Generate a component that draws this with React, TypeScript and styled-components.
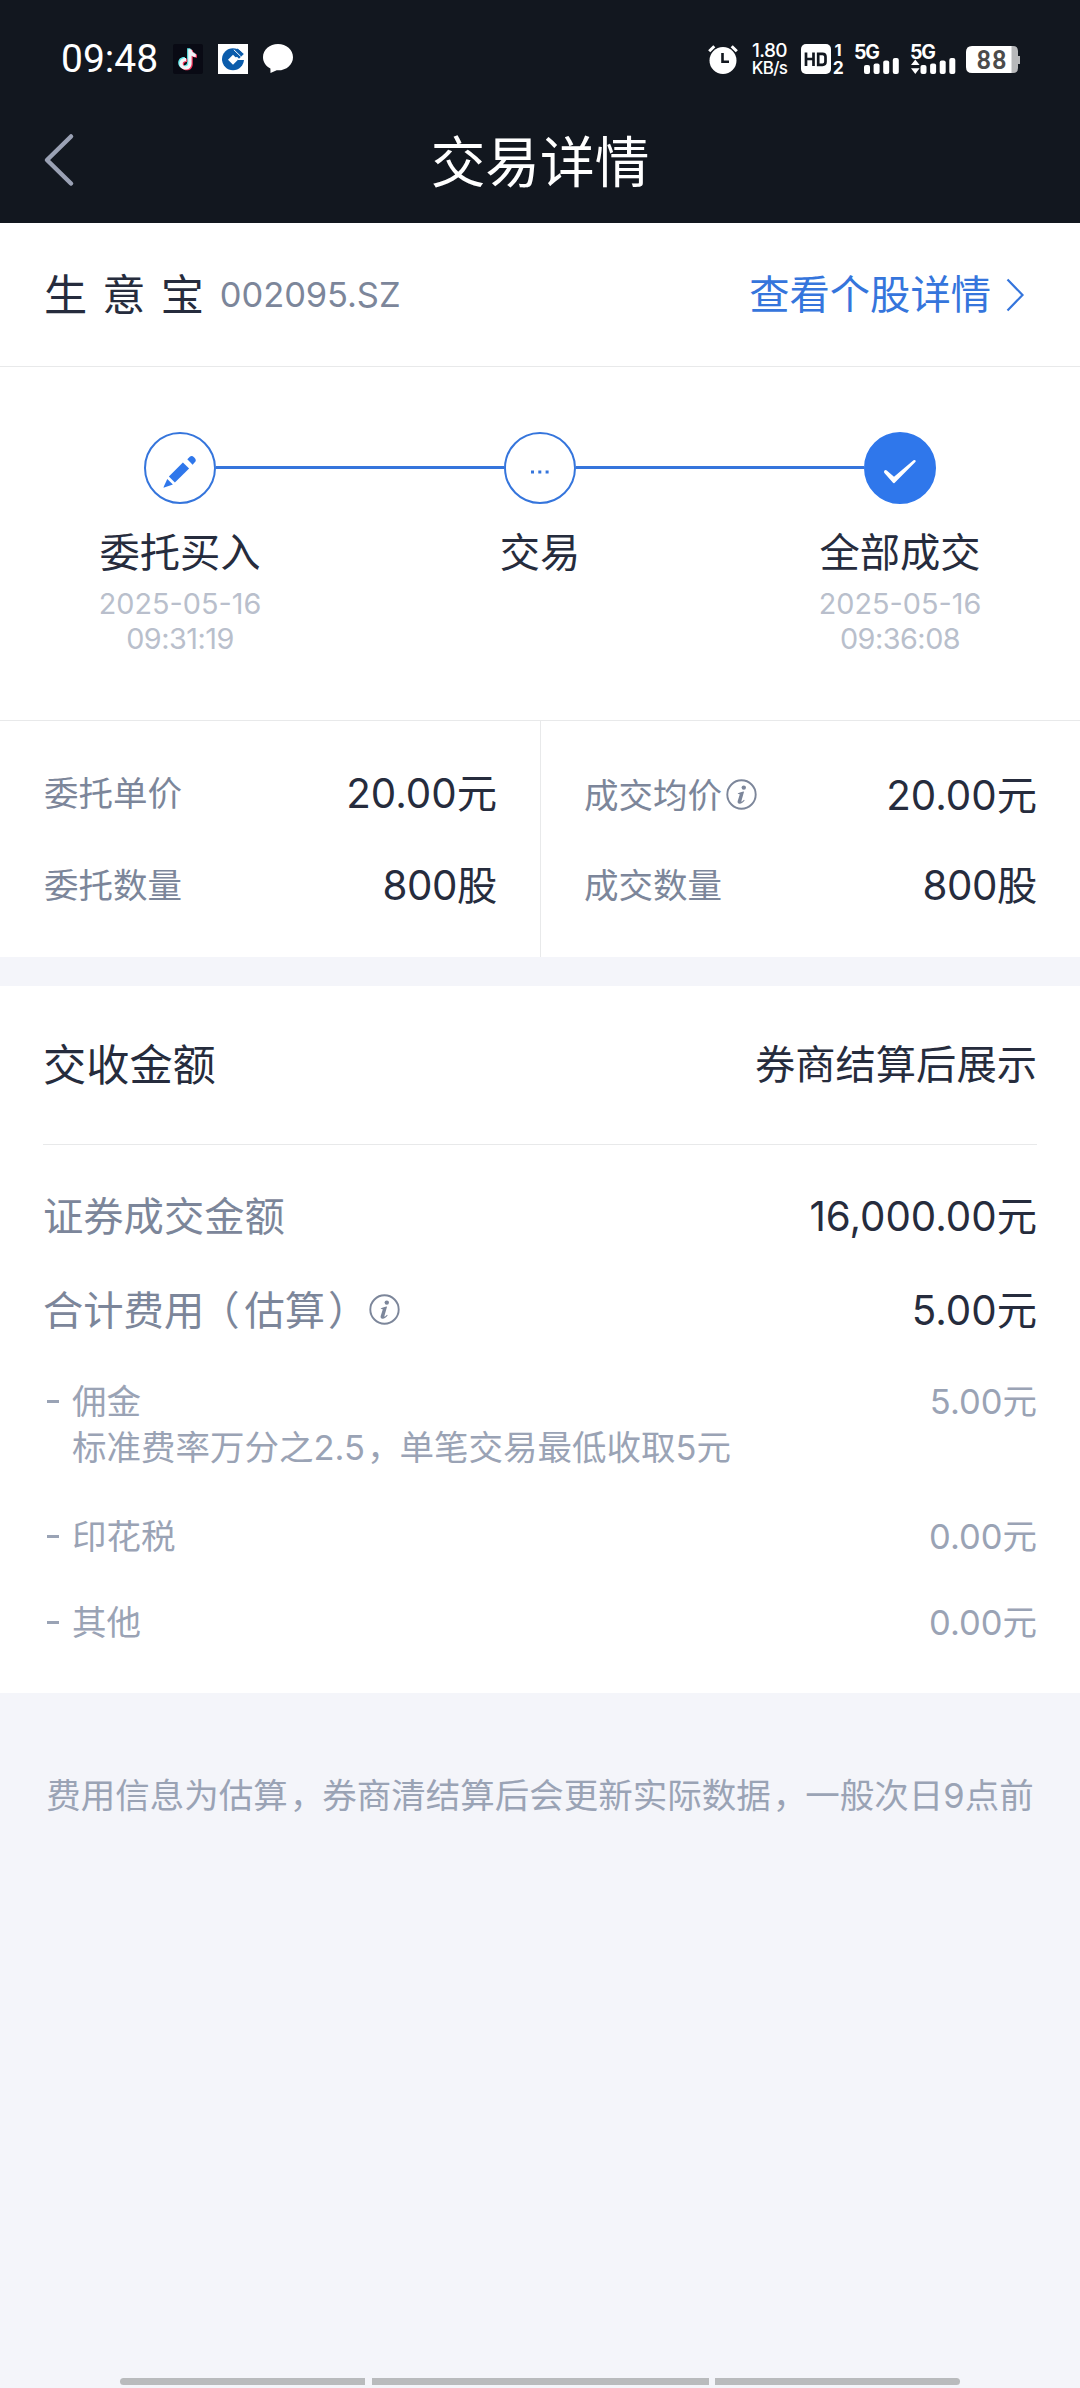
import React from "react";
import styled, { createGlobalStyle } from "styled-components";

const color = {
  bar: "#12171f",
  page: "#f4f5fa",
  ink: "#262c3d",
  label: "#7c869a",
  muted: "#9aa3b5",
  faint: "#b9bfcc",
  rule: "#e8e9ea",
  link: "#3575dc",
  blue: "#2f77eb",
};

const GlobalStyle = createGlobalStyle`
  * { box-sizing: border-box; }
  body {
    margin: 0;
    background: ${color.page};
    font-family: Inter, "Noto Sans CJK SC", sans-serif;
    font-weight: 400;
    color: ${color.ink};
  }
  svg { display: block; flex: none; overflow: visible; }
`;

const Screen = styled.div`
  width: 1080px;
  height: 2388px;
  display: flex;
  flex-direction: column;
  background: ${color.page};
  overflow: hidden;
`;

const Header = styled.header`
  height: 223px;
  background: ${color.bar};
  color: #fff;
`;

const StatusBar = styled.div`
  height: 104px;
  padding: 44px 60px 0 61px;
  display: flex;
  justify-content: space-between;
`;

const StatusGroup = styled.div`
  height: 30px;
  display: flex;
  align-items: center;
`;

const Clock = styled.span`
  width: 112px;
  font: 400 39px/46px Roboto, sans-serif;
  white-space: nowrap;
`;

const AppIcons = styled.div`
  display: flex;
  gap: 15px;
`;

const NetSpeed = styled.div`
  width: 37px;
  margin: 0 13px;
  display: flex;
  flex-direction: column;
  align-items: center;
  white-space: nowrap;
  gap: 1px;
`;

const SpeedText = styled.span<{ $size: number; $spacing: number }>`
  font-size: ${(p) => p.$size}px;
  letter-spacing: ${(p) => p.$spacing}px;
  line-height: 16px;
  font-weight: 500;
`;

const StatusIcons = styled.div`
  display: flex;
  gap: 11px;
  margin-right: 10px;
`;

const NavBar = styled.div`
  height: 119px;
  padding: 0 44px;
  display: grid;
  grid-template-columns: 60px 1fr 60px;
  align-items: center;
`;

const Title = styled.h1`
  margin: 0;
  padding-bottom: 3px;
  text-align: center;
  font-size: 54.7px;
  line-height: 80px;
  font-weight: 400;
`;

const BackIcon = styled.svg`
  margin-bottom: 8px;
`;

const StockRow = styled.section`
  height: 144px;
  padding: 0 56px 0 44px;
  display: flex;
  align-items: center;
  background: #fff;
  border-bottom: 1px solid ${color.rule};
`;

const StockName = styled.span`
  font-size: 43.2px;
  line-height: 60px;
  word-spacing: 3px;
`;

const StockCode = styled.span`
  margin-left: 16px;
  flex: 1;
  font-size: 34.5px;
  letter-spacing: -0.1px;
  line-height: 48px;
  color: ${color.label};
`;

const StockLink = styled.a`
  display: flex;
  align-items: center;
  gap: 15px;
  font-size: 40.3px;
  line-height: 56px;
  color: ${color.link};
`;

const Steps = styled.section`
  height: 354px;
  padding-top: 65px;
  display: grid;
  grid-template-columns: repeat(3, 360px);
  background: #fff;
  border-bottom: 1px solid ${color.rule};
`;

const Step = styled.div`
  display: flex;
  flex-direction: column;
  align-items: center;
`;

const StepTrack = styled.div`
  width: 100%;
  height: 72px;
  display: flex;
  align-items: center;
`;

const TrackLine = styled.i<{ $on: boolean }>`
  flex: 1;
  height: 3px;
  margin-bottom: 1px;
  background: ${(p) => (p.$on ? color.link : "transparent")};
`;

const StepDot = styled.span<{ $filled?: boolean }>`
  width: 72px;
  height: 72px;
  border-radius: 50%;
  border: 2px solid ${(p) => (p.$filled ? color.blue : color.link)};
  background: ${(p) => (p.$filled ? color.blue : "#fff")};
  display: flex;
  align-items: center;
  justify-content: center;
`;

const IconNudge = styled.span<{ $top: number }>`
  padding-top: ${(p) => p.$top}px;
`;

const StepLabel = styled.span`
  margin-top: 21px;
  font-size: 40.3px;
  line-height: 56px;
`;

const StepTime = styled.time`
  margin-top: 5px;
  display: flex;
  flex-direction: column;
  align-items: center;
  font-size: 28.8px;
  line-height: 35px;
  color: ${color.faint};
`;

const TimeText = styled.span`
  letter-spacing: -0.5px;
`;

const Figures = styled.section`
  height: 236px;
  display: grid;
  grid-template-columns: 540px 540px;
  background: #fff;
`;

const FigureColumn = styled.div<{ $divided?: boolean }>`
  padding: 44px 43px 0 ${(p) => (p.$divided ? 43 : 44)}px;
  border-left: ${(p) => (p.$divided ? `1px solid ${color.rule}` : "0")};
  display: flex;
  flex-direction: column;
  gap: 34px;
`;

const FigureRow = styled.div<{ $shift?: number }>`
  height: 58px;
  padding-top: ${(p) => (p.$shift ?? 0) * 2}px;
  display: flex;
  align-items: center;
  justify-content: space-between;
`;

const FigureLabel = styled.span`
  display: flex;
  align-items: center;
  gap: 4px;
  font-size: 34.5px;
  line-height: 50px;
  color: ${color.label};
`;

const Amount = styled.span<{ $muted?: boolean; $tight?: boolean }>`
  font-size: ${(p) => (p.$muted ? 34.5 : 40.3)}px;
  line-height: ${(p) => (p.$muted ? 46 : 58)}px;
  letter-spacing: ${(p) => (p.$tight ? -0.4 : 0)}px;
  color: ${(p) => (p.$muted ? color.muted : color.ink)};
`;

const Settlement = styled.section`
  height: 707px;
  margin-top: 29px;
  padding: 0 43px;
  background: #fff;
`;

const SettlementHead = styled.div`
  height: 159px;
  border-bottom: 1px solid ${color.rule};
  display: flex;
  align-items: center;
  justify-content: space-between;
`;

const SettlementTitle = styled.h2`
  margin: 0;
  font-size: 43.2px;
  line-height: 60px;
  font-weight: 400;
`;

const CostList = styled.div`
  padding-top: 43px;
`;

const CostRow = styled.div<{ $after: number }>`
  height: 58px;
  margin-bottom: ${(p) => p.$after}px;
  display: flex;
  align-items: center;
  justify-content: space-between;
`;

const CostLabel = styled.span`
  display: flex;
  align-items: center;
  gap: 4px;
  white-space: nowrap;
  font-size: 40.3px;
  line-height: 58px;
  color: ${color.label};
`;

/* Moves a full-width mark inside its own em box without changing the line's width. */
const Mark = styled.span<{ $by: number }>`
  margin-left: ${(p) => p.$by}px;
  margin-right: ${(p) => -p.$by}px;
`;

const FeeRow = styled.div<{ $after: number }>`
  margin-bottom: ${(p) => p.$after}px;
  display: grid;
  grid-template-columns: 29px 1fr auto;
  font-size: 34.5px;
  line-height: 46px;
  color: ${color.muted};
`;

const FeeDash = styled.i`
  width: 12px;
  height: 2.5px;
  margin: 21px 0 0 4px;
  background: ${color.muted};
`;

const FeeText = styled.div`
  display: flex;
  flex-direction: column;
  white-space: nowrap;
`;

const Note = styled.p`
  margin: 78px 0 0;
  text-align: center;
  white-space: nowrap;
  font-size: 34.5px;
  line-height: 50px;
  color: ${color.muted};
`;

const HomeIndicator = styled.div`
  margin-top: auto;
  padding: 0 120px 3px;
  display: grid;
  grid-template-columns: 245px 337px 245px;
  justify-content: space-between;
`;

const IndicatorPart = styled.i<{ $radius: string }>`
  height: 7px;
  border-radius: ${(p) => p.$radius};
  background: #b9bbbd;
`;

const InfoSvg = styled.svg`
  margin-bottom: 3px;
`;

function TikTokIcon() {
  const note =
    "M14.7 5.2h3.2c.3 2.6 1.8 4.2 4.3 4.5v3.3c-1.6-.05-3-.5-4.2-1.3v7.2c0 4.3-2.7 6.6-6.2 6.6-3.4 0-6-2.4-6-5.8 0-3.7 2.9-6.1 6.7-5.7v3.4c-2-.4-3.4.6-3.4 2.3 0 1.5 1.2 2.5 2.6 2.5 1.8 0 3-1.2 3-3.3z";
  return (
    <svg width="30" height="30" viewBox="0 0 30 30">
      <rect width="30" height="30" rx="2" fill="#090a14" />
      <path d={note} fill="#5fe8ea" transform="translate(-.6 -.9)" />
      <path d={note} fill="#f5365c" transform="translate(1.8 .8)" />
      <path d={note} fill="#f1f4f8" transform="translate(.6 0)" />
    </svg>
  );
}

function BankIcon() {
  return (
    <svg width="30" height="30" viewBox="0 0 30 30">
      <rect width="30" height="30" fill="#fff" />
      <circle cx="15" cy="15.3" r="11" fill="#0b5cab" />
      <path d="M15 10.8l5 5-5 5-5-5z" fill="#fff" />
      <path d="M17 13.8l3 2.2H27V9z" fill="#fff" />
      <path d="M19.5 4.6l6.3 5.5-4.8 4.6-6-6z" fill="#0b5cab" />
      <path d="M15.8 5.7l7 6.8" stroke="#fff" strokeWidth="1" fill="none" />
    </svg>
  );
}

function BubbleIcon() {
  return (
    <svg width="30" height="30" viewBox="0 0 30 30">
      <path
        d="M15 0C6.7 0 0 5.8 0 13.2c0 4.7 2.8 8.9 7.4 11.2L7.5 29l6.2-2.7c9.2.7 16.3-5.5 16.3-13.1C30 5.8 23.3 0 15 0z"
        fill="#fff"
      />
    </svg>
  );
}

function AlarmIcon() {
  return (
    <svg width="30" height="30" viewBox="0 0 30 30">
      <circle cx="15" cy="16.5" r="13.5" fill="#fff" />
      <path d="M1.2 7.3L6.3 2.3M28.8 7.3L23.7 2.3" stroke="#fff" strokeWidth="3" />
      <path d="M14.5 9v8.8h6.5" stroke={color.bar} strokeWidth="2.6" fill="none" />
    </svg>
  );
}

function HdIcon() {
  return (
    <svg width="43" height="30" viewBox="0 0 43 30" fontFamily="Inter, sans-serif" fontWeight="700">
      <rect width="30" height="30" rx="5" fill="#fff" />
      <path
        d="M5 8.5v13.5M12.5 8.5v13.5M5 15h7.5M17.2 9.8h4.3q3 0 3 3v5q0 3-3 3h-4.3z"
        stroke={color.bar}
        strokeWidth="2.7"
        fill="none"
      />
      <text x="33.5" y="12" fontSize="16.5" fill="#fff">1</text>
      <text x="31.8" y="30" fontSize="17.5" fill="#fff">2</text>
    </svg>
  );
}

function SignalIcon({ busy = false }: { busy?: boolean }) {
  const heights = [9, 10.5, 13.5, 16];
  const start = busy ? 9.5 : 9;
  return (
    <svg width="45" height="30" viewBox="0 0 45 30" fill="#fff">
      <text x="-1" y="14.5" fontFamily="Inter, sans-serif" fontWeight="700" fontSize="19.5" letterSpacing="-1.2">
        5G
      </text>
      {heights.map((h, i) => (
        <rect key={i} x={start + i * 9.6} y={30 - h} width="6" height={h} rx="2" />
      ))}
      {busy && <path d="M0 21l4.3-5.5L8.6 21zM0 24.3h8.6L4.3 30z" />}
    </svg>
  );
}

function BatteryIcon() {
  return (
    <svg width="54" height="27" viewBox="0 0 54 27">
      <path d="M44 0h3q5 0 5 5v5h2v8h-2v4q0 5-5 5h-3z" fill="#b7b8ba" />
      <path d="M6 0h39.5v27H6q-6 0-6-6V6q0-6 6-6z" fill="#fff" />
      <text
        x="26"
        y="23"
        textAnchor="middle"
        fontFamily="Roboto, sans-serif"
        fontWeight="600"
        fontSize="25.5"
        letterSpacing="1"
        fill="#4b4b4b"
      >
        88
      </text>
    </svg>
  );
}

function InfoIcon() {
  return (
    <InfoSvg width="31" height="31" viewBox="0 0 31 31">
      <circle cx="15.5" cy="15.5" r="14.2" fill="none" stroke={color.label} strokeWidth="1.9" />
      <circle cx="17.8" cy="8.6" r="2.2" fill={color.label} />
      <path
        d="M11.8 14.4c2-.9 3.9-1.5 6.3-1.8l-2.7 9.3c-.2.9.4.9 1 .4l1.6-1.6.7.5c-1.6 2.4-3.4 3.6-5.2 3.5-1.7 0-2.2-1.2-1.8-2.6l1.9-6.2c.2-.8-.3-.9-1.7-.8z"
        fill={color.label}
      />
    </InfoSvg>
  );
}

function PencilIcon() {
  return (
    <svg width="34" height="34" viewBox="0 0 34 34" fill={color.blue}>
      <path d="M24.3 4.3l2.5-2.5q2-1.6 4.2.4l.7.7q2 2.2.3 4.2l-2.4 2.7z" />
      <path d="M19.9 7.5l6.2 5.9L11.9 27.6 5.9 21.4z" />
      <path d="M4.3 24.1l5.6 5.3-8.7 3.2q-.9.2-.6-.7z" />
    </svg>
  );
}

function DotsIcon() {
  return (
    <svg width="18" height="4" viewBox="0 0 18 4" fill={color.link}>
      <rect x="0" y=".5" width="3" height="3" />
      <rect x="7.3" y=".5" width="3" height="3" />
      <rect x="14.6" y=".5" width="3" height="3" />
    </svg>
  );
}

function CheckIcon() {
  return (
    <svg width="34" height="26" viewBox="0 0 34 26" fill="#fff">
      <path d="M1.3 11.8q1.2-1.3 2.5-.2l7.2 6.2L30.5 1.2q1.5-.8 2.2.5.3.8-.6 1.6L11.5 23.9q-.8.6-1.5-.1L1.4 14.1q-.8-1.2-.1-2.3z" />
    </svg>
  );
}

const steps = [
  { label: "委托买入", date: "2025-05-16", time: "09:31:19", icon: <IconNudge $top={8}><PencilIcon /></IconNudge> },
  { label: "交易", icon: <IconNudge $top={7}><DotsIcon /></IconNudge> },
  { label: "全部成交", date: "2025-05-16", time: "09:36:08", icon: <IconNudge $top={7}><CheckIcon /></IconNudge> },
];

export default function App() {
  return (
    <Screen>
      <GlobalStyle />
      <Header>
        <StatusBar>
          <StatusGroup>
            <Clock>09:48</Clock>
            <AppIcons>
              <TikTokIcon />
              <BankIcon />
              <BubbleIcon />
            </AppIcons>
          </StatusGroup>
          <StatusGroup>
            <AlarmIcon />
            <NetSpeed>
              <SpeedText $size={19} $spacing={-0.6}>1.80</SpeedText>
              <SpeedText $size={17} $spacing={-0.7}>KB/s</SpeedText>
            </NetSpeed>
            <StatusIcons>
              <HdIcon />
              <SignalIcon />
              <SignalIcon busy />
            </StatusIcons>
            <BatteryIcon />
          </StatusGroup>
        </StatusBar>
        <NavBar>
          <BackIcon width="30" height="54" viewBox="0 0 30 54">
            <path
              d="M27 3.5L3 27l24 23.5"
              fill="none"
              stroke="#9aa1b4"
              strokeWidth="4.5"
              strokeLinecap="round"
              strokeLinejoin="round"
            />
          </BackIcon>
          <Title>交易详情</Title>
        </NavBar>
      </Header>

      <StockRow>
        <StockName>生 意 宝</StockName>
        <StockCode>002095.SZ</StockCode>
        <StockLink>
          查看个股详情
          <svg width="18" height="34" viewBox="0 0 18 34">
            <path d="M1.5 1.5L16.5 17l-15 15.5" fill="none" stroke={color.link} strokeWidth="2.2" />
          </svg>
        </StockLink>
      </StockRow>

      <Steps>
        {steps.map((step, i) => (
          <Step key={step.label}>
            <StepTrack>
              <TrackLine $on={i > 0} />
              <StepDot $filled={i === steps.length - 1}>{step.icon}</StepDot>
              <TrackLine $on={i < steps.length - 1} />
            </StepTrack>
            <StepLabel>{step.label}</StepLabel>
            {step.date && (
              <StepTime>
                <span>{step.date}</span>
                <TimeText>{step.time}</TimeText>
              </StepTime>
            )}
          </Step>
        ))}
      </Steps>

      <Figures>
        <FigureColumn>
          <FigureRow>
            <FigureLabel>委托单价</FigureLabel>
            <Amount>20.00元</Amount>
          </FigureRow>
          <FigureRow>
            <FigureLabel>委托数量</FigureLabel>
            <Amount $tight>800股</Amount>
          </FigureRow>
        </FigureColumn>
        <FigureColumn $divided>
          <FigureRow $shift={2}>
            <FigureLabel>
              成交均价
              <InfoIcon />
            </FigureLabel>
            <Amount>20.00元</Amount>
          </FigureRow>
          <FigureRow>
            <FigureLabel>成交数量</FigureLabel>
            <Amount $tight>800股</Amount>
          </FigureRow>
        </FigureColumn>
      </Figures>

      <Settlement>
        <SettlementHead>
          <SettlementTitle>交收金额</SettlementTitle>
          <Amount>券商结算后展示</Amount>
        </SettlementHead>
        <CostList>
          <CostRow $after={36}>
            <CostLabel>证券成交金额</CostLabel>
            <Amount>16,000.00元</Amount>
          </CostRow>
          <CostRow $after={39}>
            <CostLabel>
              <span>
                合计费用<Mark $by={-5}>（</Mark>估算<Mark $by={3}>）</Mark>
              </span>
              <InfoIcon />
            </CostLabel>
            <Amount>5.00元</Amount>
          </CostRow>
          <FeeRow $after={43}>
            <FeeDash />
            <FeeText>
              <span>佣金</span>
              <span>
                标准费率万分之2.5<Mark $by={2}>，</Mark>单笔交易最低收取5元
              </span>
            </FeeText>
            <Amount $muted>5.00元</Amount>
          </FeeRow>
          <FeeRow $after={40}>
            <FeeDash />
            <FeeText>印花税</FeeText>
            <Amount $muted>0.00元</Amount>
          </FeeRow>
          <FeeRow $after={0}>
            <FeeDash />
            <FeeText>其他</FeeText>
            <Amount $muted>0.00元</Amount>
          </FeeRow>
        </CostList>
      </Settlement>

      <Note>
        费用信息为估算<Mark $by={2}>，</Mark>券商清结算后会更新实际数据<Mark $by={2}>，</Mark>一般次日9点前
      </Note>

      <HomeIndicator>
        <IndicatorPart $radius="4px 0 0 4px" />
        <IndicatorPart $radius="0" />
        <IndicatorPart $radius="0 4px 4px 0" />
      </HomeIndicator>
    </Screen>
  );
}
